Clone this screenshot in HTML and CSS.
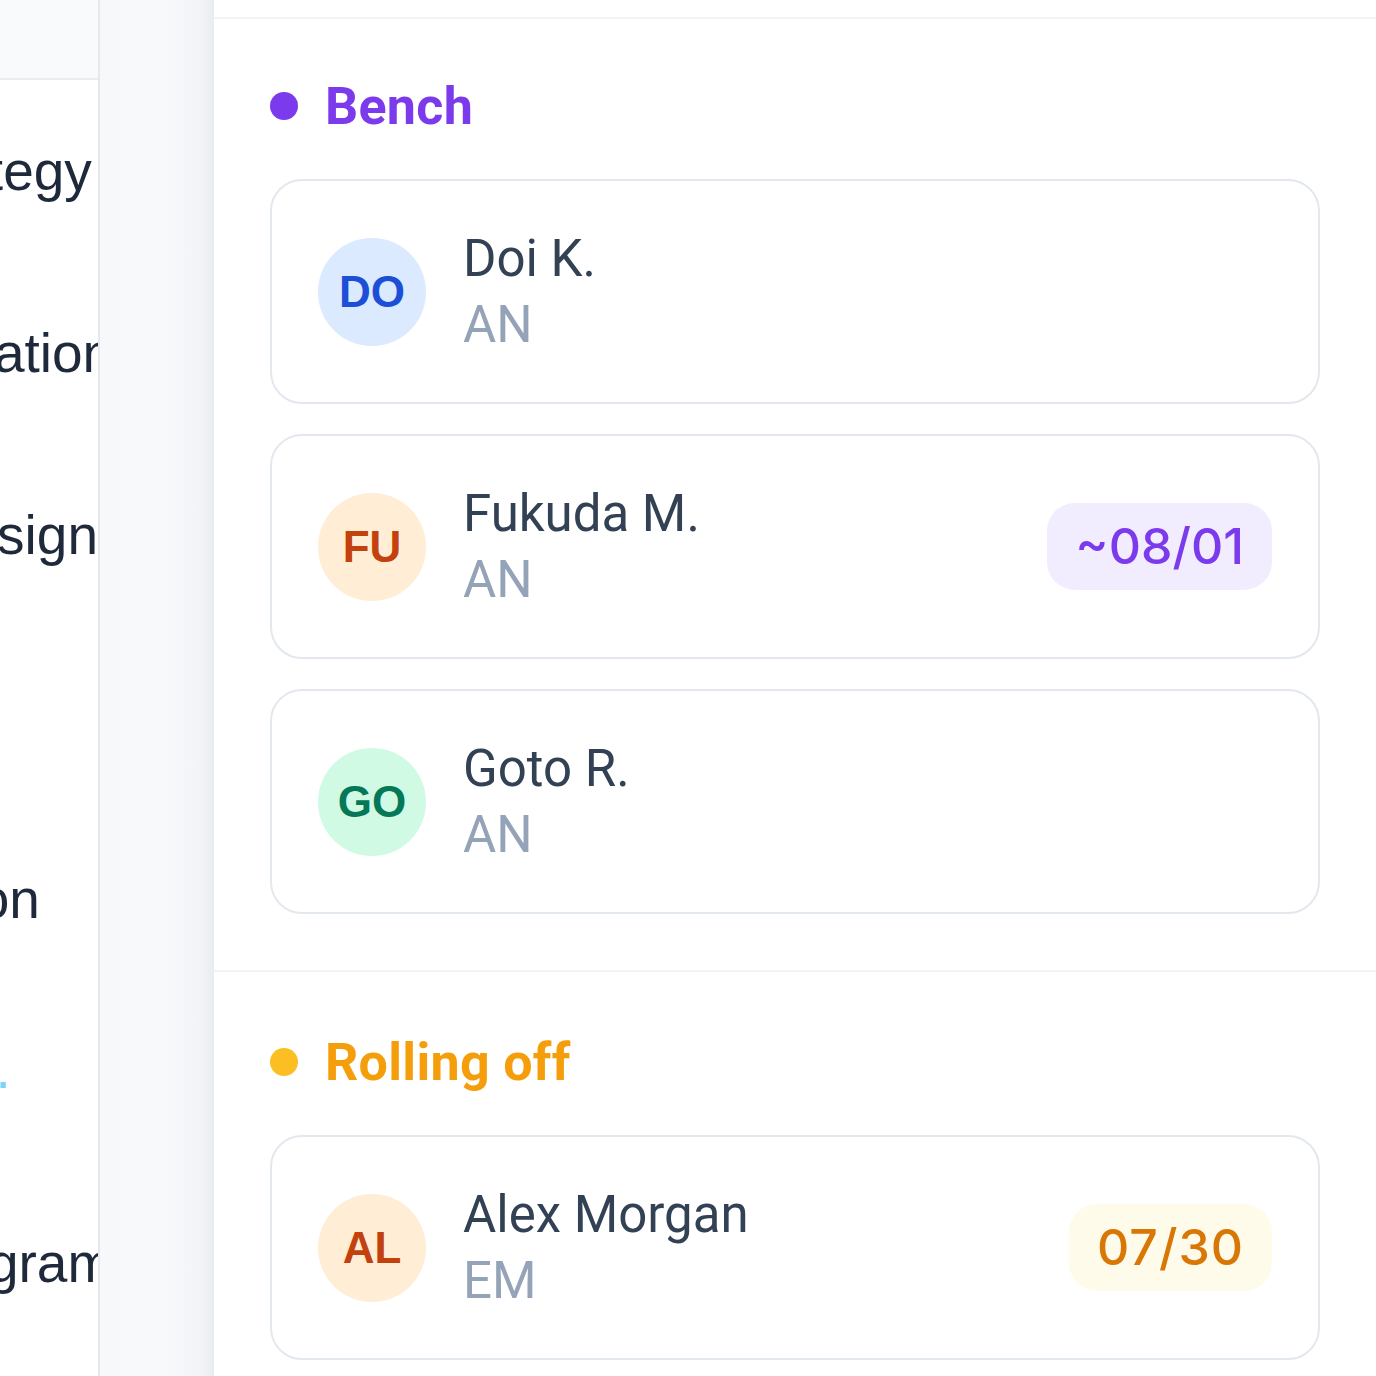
FILE: index.html
```html
<!DOCTYPE html>
<html lang="en">
<head>
<meta charset="utf-8">
<title>Staffing</title>
<link rel="stylesheet" href="styles.css">
</head>
<body>
<div class="app">
  <aside class="sidebar">
    <div class="sidebar-head"></div>
    <ul class="nav">
      <li class="nav-item">Strategy</li>
      <li class="nav-item">Migration</li>
      <li class="nav-item">redesign</li>
      <li class="nav-item">UX</li>
      <li class="nav-item">Action</li>
      <li class="nav-item nav-item-link">Log ·</li>
      <li class="nav-item">Telegram</li>
    </ul>
  </aside>
  <div class="strip"></div>
  <main class="panel">
    <div class="panel-top"></div>

    <section class="section">
      <h2 class="section-head bench"><span class="dot"></span>Bench</h2>
      <div class="cards">
        <div class="card">
          <div class="avatar av-blue">DO</div>
          <div class="info"><div class="name">Doi K.</div><div class="role">AN</div></div>
        </div>
        <div class="card">
          <div class="avatar av-orange">FU</div>
          <div class="info"><div class="name">Fukuda M.</div><div class="role">AN</div></div>
          <span class="pill pill-violet">~08/01</span>
        </div>
        <div class="card">
          <div class="avatar av-green">GO</div>
          <div class="info"><div class="name">Goto R.</div><div class="role">AN</div></div>
        </div>
      </div>
    </section>

    <section class="section section-next">
      <h2 class="section-head rolling"><span class="dot"></span>Rolling off</h2>
      <div class="cards">
        <div class="card">
          <div class="avatar av-orange">AL</div>
          <div class="info"><div class="name">Alex Morgan</div><div class="role">EM</div></div>
          <span class="pill pill-amber">07/30</span>
        </div>
      </div>
    </section>
  </main>
</div>
</body>
</html>
```

FILE: styles.css
```css
* { box-sizing: border-box; }
html, body { margin: 0; padding: 0; background: #ffffff; }
body { font-family: Roboto, "Liberation Sans", Arial, sans-serif; }

.app {
  display: flex;
  height: 1376px;
  overflow: hidden;
}

/* left list, mostly clipped */
.sidebar {
  width: 100px;
  flex: none;
  overflow: hidden;
  background: #ffffff;
  border-right: 2px solid #e5e9ef;
}
.sidebar-head {
  height: 80px;
  background: #f8fafc;
  border-bottom: 2px solid #e9edf2;
}
.nav {
  list-style: none;
  margin: 0 0 0 -113px;
  padding: 0;
  font-family: "Liberation Sans", Arial, sans-serif;
  font-size: 55px;
  color: #1e293b;
}
.nav-item {
  height: 182px;
  display: flex;
  align-items: center;
  white-space: nowrap;
}
.nav-item-link { color: #7dd3fc; }

/* gray strip */
.strip {
  width: 114px;
  flex: none;
  background: linear-gradient(to right, #f6f8fa 0%, #f7f9fb 55%, #f2f4f7 88%, #e8ecf0 100%);
}

/* main panel */
.panel {
  flex: 1;
  background: #ffffff;
  min-width: 0;
}
.panel-top {
  height: 19px;
  border-bottom: 2px solid #f1f4f7;
}
.section {
  padding: 56px 56px 56px 56px;
  border-bottom: 2px solid #f1f4f7;
}
.section-next { padding-top: 59px; }
.section-head {
  display: flex;
  align-items: center;
  gap: 27px;
  height: 62px;
  margin: 0 0 42px 0;
  font-size: 52px;
  font-weight: 700;
  letter-spacing: 0.3px;
}
.dot {
  width: 28px;
  height: 28px;
  border-radius: 50%;
  flex: none;
}
.bench { color: #7c3aed; }
.bench .dot { background: #7c3aed; }
.rolling { color: #f59e0b; }
.rolling .dot { background: #fbbf24; }

.cards {
  display: flex;
  flex-direction: column;
  gap: 30px;
}
.card {
  height: 225px;
  border: 2px solid #e3e8ef;
  border-radius: 32px;
  padding: 0 46px;
  display: flex;
  align-items: center;
  gap: 37px;
  background: #ffffff;
}
.avatar {
  width: 108px;
  height: 108px;
  border-radius: 50%;
  flex: none;
  display: flex;
  align-items: center;
  justify-content: center;
  font-family: "Liberation Sans", Arial, sans-serif;
  font-weight: 700;
  font-size: 44px;
}
.av-blue { background: #dbeafe; color: #1d4ed8; }
.av-orange { background: #ffedd5; color: #c2410c; }
.av-green { background: #d1fae5; color: #047857; }

.info {
  flex: 1;
  min-width: 0;
}
.name {
  font-size: 51px;
  line-height: 66px;
  color: #334155;
}
.role {
  font-size: 51px;
  line-height: 66px;
  color: #94a3b8;
}

.pill {
  flex: none;
  height: 87px;
  line-height: 87px;
  padding: 0 28px;
  border-radius: 28px;
  font-family: Inter, Roboto, sans-serif;
  font-size: 50px;
  font-weight: 500;
}
.pill-violet { background: #f1ecfe; color: #7c3aed; }
.pill-amber { background: #fffbeb; color: #d97706; letter-spacing: 1px; }
```
